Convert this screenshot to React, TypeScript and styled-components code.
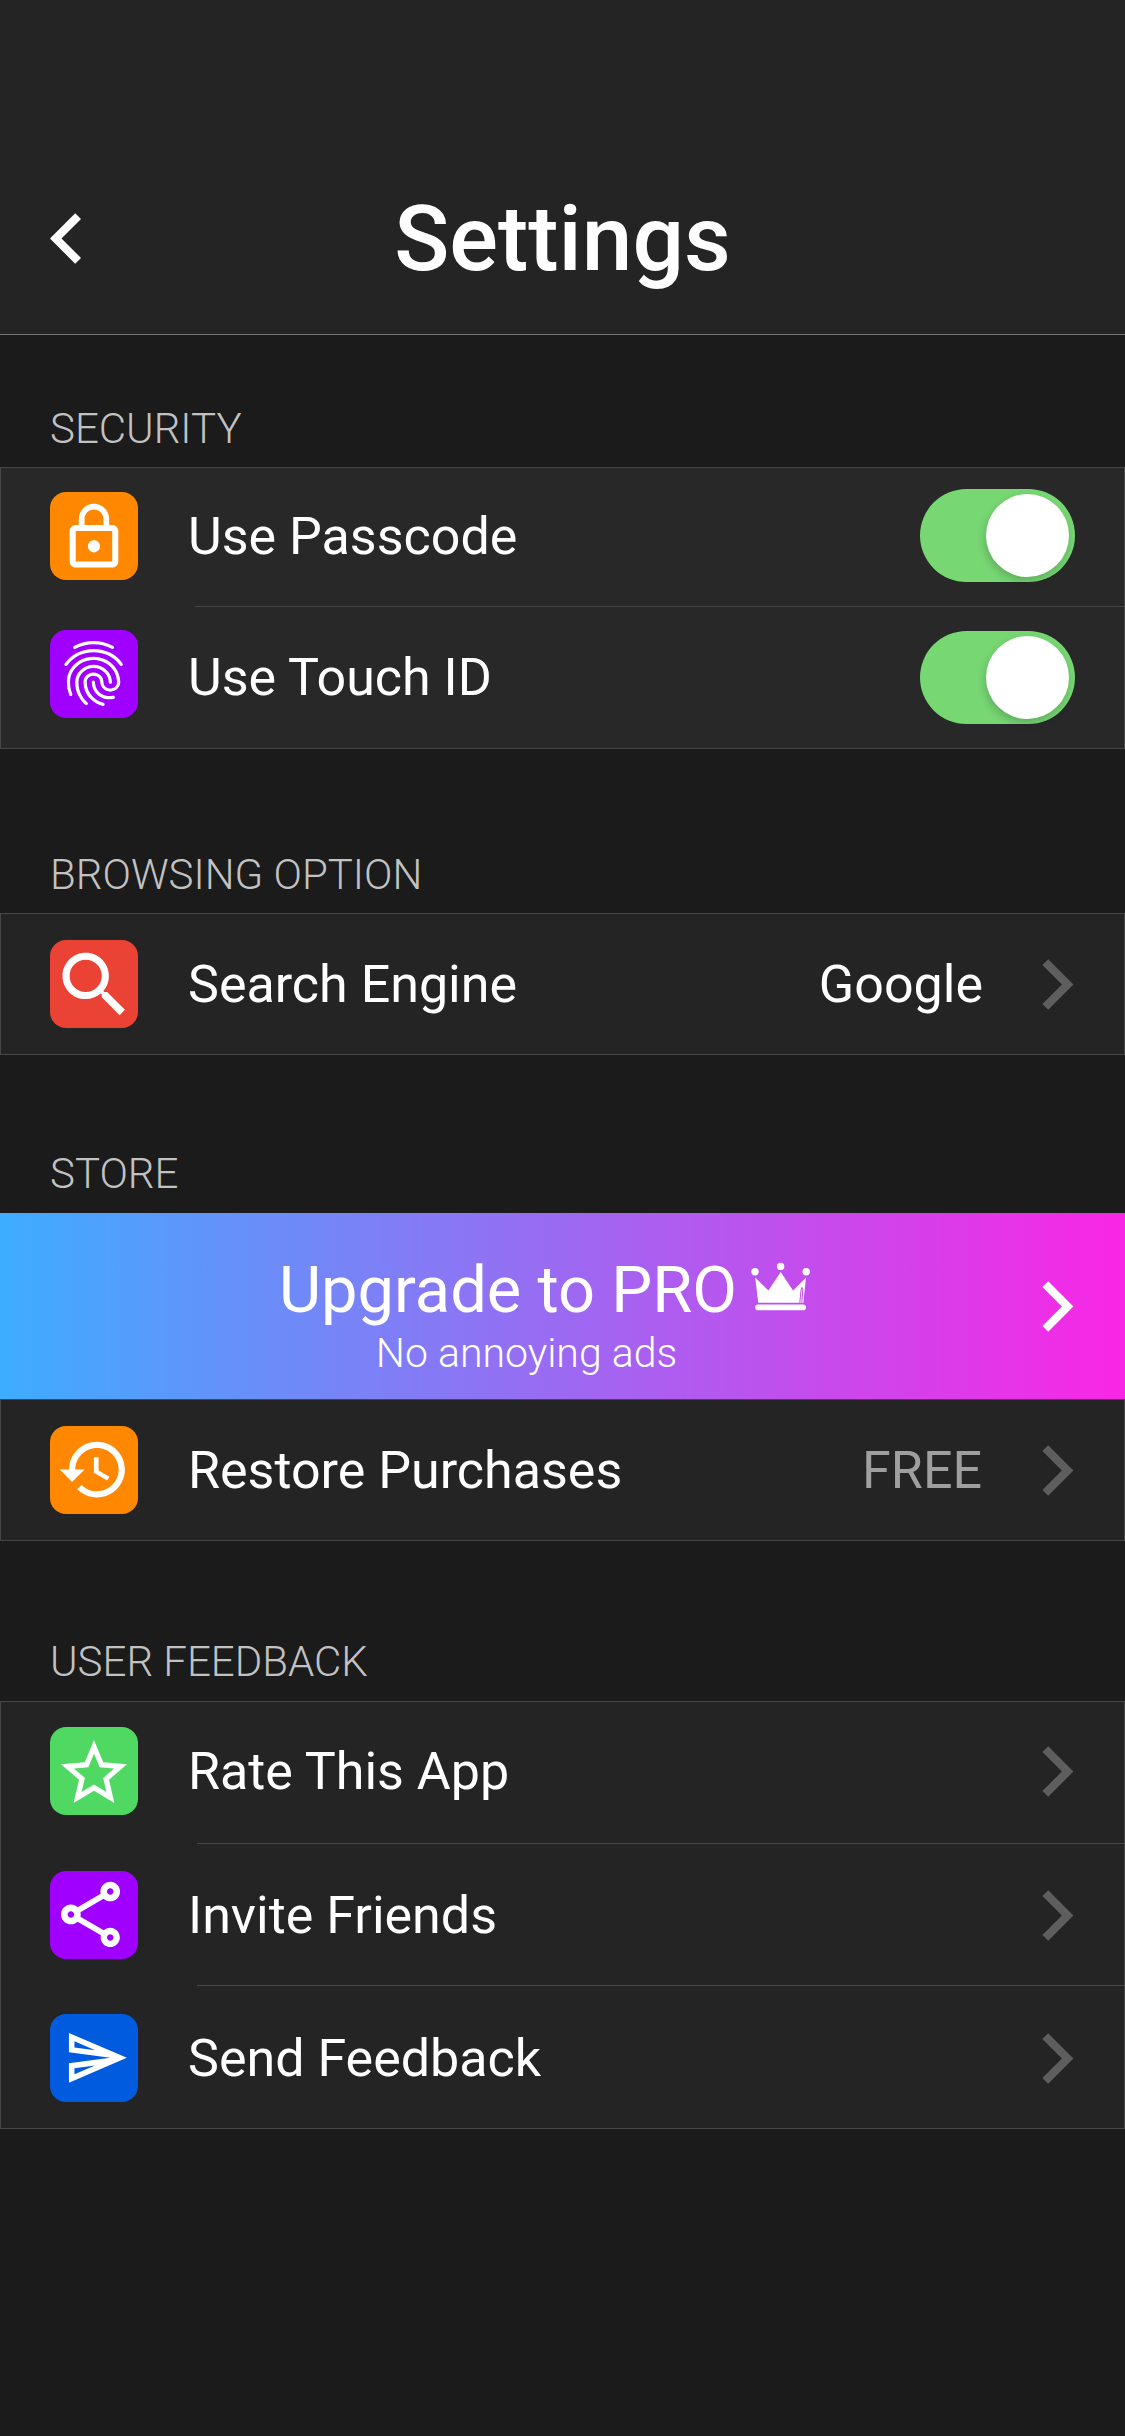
import React from "react";
import styled, { createGlobalStyle } from "styled-components";
import { MdFingerprint } from "react-icons/md";

const GlobalStyle = createGlobalStyle`
  *, *::before, *::after { box-sizing: border-box; }
  body { margin: 0; background: #1b1b1b; }
  h1, h2, p { margin: 0; }
`;

const LINE = "#464646";

const Screen = styled.main`
  display: flex;
  flex-direction: column;
  width: 1125px;
  height: 2436px;
  background: #1b1b1b;
  color: #fff;
  font-family: Roboto, "Liberation Sans", sans-serif;
`;

const Header = styled.header`
  display: grid;
  grid-template-columns: 1fr auto 1fr;
  align-items: center;
  height: 335px;
  padding: 143px 50px 0;
  background: #242424;
  border-bottom: 1px solid #757575;
`;

const Title = styled.h1`
  font-size: 91px;
  font-weight: 500;
  line-height: 106px;
`;

const Section = styled.section<{ $gap: number }>`
  padding-top: ${(p) => p.$gap}px;
`;

const SectionTitle = styled.h2`
  height: 54px;
  padding-left: 50px;
  color: #c2c2c2;
  font-size: 42px;
  font-weight: 300;
  line-height: 54px;
`;

const Card = styled.div<{ $gap?: number; $light?: boolean }>`
  margin-top: ${(p) => p.$gap ?? 0}px;
  background: ${(p) => (p.$light ? "#282828" : "#242424")};
  border: 1px solid ${LINE};
`;

const Row = styled.div<{ $height: number; $top?: number; $bottom?: number }>`
  display: flex;
  align-items: center;
  height: ${(p) => p.$height}px;
  padding: ${(p) => p.$top ?? 0}px 50px ${(p) => p.$bottom ?? 0}px 49px;
`;

const Divider = styled.hr<{ $inset: number }>`
  height: 1px;
  margin: 0 0 0 ${(p) => p.$inset}px;
  border: 0;
  background: ${LINE};
`;

const Tile = styled.span<{ $color: string; $lift?: number }>`
  flex: none;
  width: 88px;
  height: 88px;
  margin: 0 50px ${(p) => p.$lift ?? 0}px 0;
  border-radius: 16px;
  background: ${(p) => p.$color};
  svg { display: block; }
`;

const Label = styled.span`
  flex: 1;
  padding-top: 1px;
  font-size: 52px;
  line-height: 70px;
  white-space: nowrap;
`;

const Value = styled.span<{ $muted?: boolean }>`
  padding-top: 1px;
  margin-right: ${(p) => (p.$muted ? 60 : 59)}px;
  color: ${(p) => (p.$muted ? "#9f9f9f" : "#fff")};
  font-size: 52px;
  line-height: 70px;
`;

const Switch = styled.span<{ $lift?: number }>`
  display: flex;
  align-items: center;
  justify-content: flex-end;
  width: 155px;
  height: 93px;
  margin: 0 -1px ${(p) => p.$lift ?? 0}px 0;
  padding-right: 6px;
  border-radius: 47px;
  background: #77d773;
`;

const Knob = styled.span`
  width: 83px;
  height: 83px;
  border-radius: 50%;
  background: #fff;
  box-shadow: -1px 4px 8px rgba(0, 0, 0, 0.2);
`;

const Banner = styled.div`
  display: grid;
  grid-template-columns: 81px 1fr 83px;
  align-items: center;
  height: 186px;
  margin-top: 12px;
  background: linear-gradient(90deg, #3eadff 0%, #f926e5 100%);
`;

const BannerText = styled.div`
  grid-column: 2;
  display: flex;
  flex-direction: column;
  align-items: center;
  padding: 18px 63px 0 0;
`;

const BannerTitle = styled.p`
  display: flex;
  align-items: center;
  height: 76px;
  font-size: 65px;
  line-height: 76px;
  white-space: nowrap;
`;

const BannerNote = styled.p`
  padding-right: 7px;
  font-size: 41px;
  font-weight: 300;
  line-height: 50px;
`;

const CrownSvg = styled.svg`
  margin: -8px -38px 0 7px;
`;

const icons = {
  lock: {
    x: 7.5,
    y: 8.7,
    scale: 3.04,
    d: "M12 17c1.1 0 2-.9 2-2s-.9-2-2-2-2 .9-2 2 .9 2 2 2zm6-9h-1V6c0-2.76-2.24-5-5-5S7 3.24 7 6v2H6c-1.1 0-2 .9-2 2v10c0 1.1.9 2 2 2h12c1.1 0 2-.9 2-2V10c0-1.1-.9-2-2-2zM8.9 6c0-1.71 1.39-3.1 3.1-3.1s3.1 1.39 3.1 3.1v2H8.9V6zM18 20H6V10h12v10z",
  },
  search: {
    x: 1.8,
    y: 2,
    scale: 3.57,
    d: "M15.5 14h-.79l-.28-.27C15.41 12.59 16 11.11 16 9.5 16 5.91 13.09 3 9.5 3S3 5.91 3 9.5 5.91 16 9.5 16c1.61 0 3.09-.59 4.23-1.57l.27.28v.79l5 4.99L20.49 19l-4.99-5zm-6 0C7.01 14 5 11.99 5 9.5S7.01 5 9.5 5 14 7.01 14 9.5 11.99 14 9.5 14z",
  },
  history: {
    x: 6.7,
    y: 6.4,
    scale: 3.1,
    d: "M13 3c-4.97 0-9 4.03-9 9H1l3.89 3.89.07.14L9 12H6c0-3.87 3.13-7 7-7s7 3.13 7 7-3.13 7-7 7c-1.93 0-3.68-.79-4.94-2.06l-1.42 1.42C8.27 19.99 10.51 21 13 21c4.97 0 9-4.03 9-9s-4.03-9-9-9zm-1 5v5l4.28 2.54.72-1.21-3.5-2.08V8H12z",
  },
  star: {
    x: 4.4,
    y: 6.7,
    scale: 3.3,
    d: "M22 9.24l-7.19-.62L12 2 9.19 8.63 2 9.24l5.46 4.73L5.82 21 12 17.27 18.18 21l-1.63-7.03L22 9.24zM12 15.4l-3.76 2.27 1-4.28-3.32-2.88 4.38-.38L12 6.1l1.71 4.04 4.38.38-3.32 2.88 1 4.28L12 15.4z",
  },
  share: {
    x: 1.2,
    y: 4.1,
    scale: 3.28,
    d: "M18 16.08c-.76 0-1.44.3-1.96.77L8.91 12.7c.05-.23.09-.46.09-.7s-.04-.47-.09-.7l7.05-4.11c.54.5 1.25.81 2.04.81 1.66 0 3-1.34 3-3s-1.34-3-3-3-3 1.34-3 3c0 .24.04.47.09.7L8.04 9.81C7.5 9.31 6.79 9 6 9c-1.66 0-3 1.34-3 3s1.34 3 3 3c.79 0 1.5-.31 2.04-.81l7.12 4.16c-.05.21-.08.43-.08.65 0 1.61 1.31 2.92 2.92 2.92s2.92-1.31 2.92-2.92-1.31-2.92-2.92-2.92zM18 4c.55 0 1 .45 1 1s-.45 1-1 1-1-.45-1-1 .45-1 1-1zM6 13c-.55 0-1-.45-1-1s.45-1 1-1 1 .45 1 1-.45 1-1 1zm12 7.02c-.55 0-1-.45-1-1s.45-1 1-1 1 .45 1 1-.45 1-1 1z",
  },
  send: {
    x: 13.4,
    y: 10.7,
    scale: 2.76,
    d: "M4.01 6.03l7.51 3.22-7.52-1 .01-2.22m7.5 8.72L4 17.97v-2.22l7.51-1M2.01 3L2 10l15 2-15 2 .01 7L23 12 2.01 3z",
  },
};

function Icon({ name }: { name: keyof typeof icons }) {
  const { x, y, scale, d } = icons[name];
  return (
    <svg width="88" height="88" viewBox="0 0 88 88" fill="#fff" aria-hidden="true">
      <path d={d} transform={`translate(${x} ${y}) scale(${scale})`} />
    </svg>
  );
}

function FingerprintIcon() {
  return (
    <svg width="88" height="88" viewBox="0 0 88 88" fill="#fff" aria-hidden="true">
      <g transform="translate(4.6 4.5) scale(3.25)">
        <MdFingerprint size={24} color="#fff" />
      </g>
    </svg>
  );
}

function Chevron({ color = "#5e5e5e" }: { color?: string }) {
  return (
    <svg width="32" height="51" viewBox="0 0 32 51" fill={color} aria-hidden="true">
      <path d="M0.4 6 L6.2 0.2 L31.4 25.5 L6.2 50.8 L0.4 45 L19.9 25.5 Z" />
    </svg>
  );
}

function BackIcon() {
  return (
    <svg width="31" height="51" viewBox="0 0 31 51" fill="#fff" aria-label="Back">
      <path d="M31 6 L25.2 0.2 L0 25.5 L25.2 50.8 L31 45 L11.5 25.5 Z" />
    </svg>
  );
}

function Crown() {
  return (
    <CrownSvg width="75" height="62" viewBox="0 0 75 62" fill="#fff" aria-hidden="true">
      <circle cx="11" cy="16.8" r="3.7" />
      <circle cx="36.6" cy="11.4" r="3.7" />
      <circle cx="62.2" cy="16.8" r="3.7" />
      <path d="M11.2 22.6 L24.4 35.6 L36.7 17 L49 35.6 L62 22.4 L59.4 47.7 H14.2 Z" />
      <path d="M55.8 47.7 L57.2 34 Q58.2 31 58.9 34 L57.8 47.7" fill="none" stroke="#c04dee" strokeWidth="1" />
      <rect x="11.2" y="49.6" width="50.8" height="5.6" rx="2.8" />
    </CrownSvg>
  );
}

function Toggle({ lift }: { lift?: number }) {
  return (
    <Switch role="switch" aria-checked="true" $lift={lift}>
      <Knob />
    </Switch>
  );
}

export default function App() {
  return (
    <>
      <GlobalStyle />
      <Screen>
        <Header>
          <BackIcon />
          <Title>Settings</Title>
        </Header>

        <Section $gap={67}>
          <SectionTitle>SECURITY</SectionTitle>
          <Card $gap={11} $light>
            <Row $height={138} $bottom={2}>
              <Tile $color="#ff8800">
                <Icon name="lock" />
              </Tile>
              <Label>Use Passcode</Label>
              <Toggle lift={1} />
            </Row>
            <Divider $inset={194} />
            <Row $height={141}>
              <Tile $color="#a000ff" $lift={7}>
                <FingerprintIcon />
              </Tile>
              <Label>Use Touch ID</Label>
              <Toggle />
            </Row>
          </Card>
        </Section>

        <Section $gap={99}>
          <SectionTitle>BROWSING OPTION</SectionTitle>
          <Card $gap={11}>
            <Row $height={140}>
              <Tile $color="#ea4335">
                <Icon name="search" />
              </Tile>
              <Label>Search Engine</Label>
              <Value>Google</Value>
              <Chevron />
            </Row>
          </Card>
        </Section>

        <Section $gap={92}>
          <SectionTitle>STORE</SectionTitle>
          <Banner>
            <BannerText>
              <BannerTitle>
                Upgrade to PRO
                <Crown />
              </BannerTitle>
              <BannerNote>No annoying ads</BannerNote>
            </BannerText>
            <Chevron color="#fff" />
          </Banner>
          <Card>
            <Row $height={140}>
              <Tile $color="#ff8800">
                <Icon name="history" />
              </Tile>
              <Label>Restore Purchases</Label>
              <Value $muted>FREE</Value>
              <Chevron />
            </Row>
          </Card>
        </Section>

        <Section $gap={94}>
          <SectionTitle>USER FEEDBACK</SectionTitle>
          <Card $gap={12}>
            <Row $height={141} $bottom={3}>
              <Tile $color="#4fd862">
                <Icon name="star" />
              </Tile>
              <Label>Rate This App</Label>
              <Chevron />
            </Row>
            <Divider $inset={196} />
            <Row $height={141} $top={1}>
              <Tile $color="#a000ff">
                <Icon name="share" />
              </Tile>
              <Label>Invite Friends</Label>
              <Chevron />
            </Row>
            <Divider $inset={196} />
            <Row $height={142} $top={2}>
              <Tile $color="#005bde">
                <Icon name="send" />
              </Tile>
              <Label>Send Feedback</Label>
              <Chevron />
            </Row>
          </Card>
        </Section>
      </Screen>
    </>
  );
}
